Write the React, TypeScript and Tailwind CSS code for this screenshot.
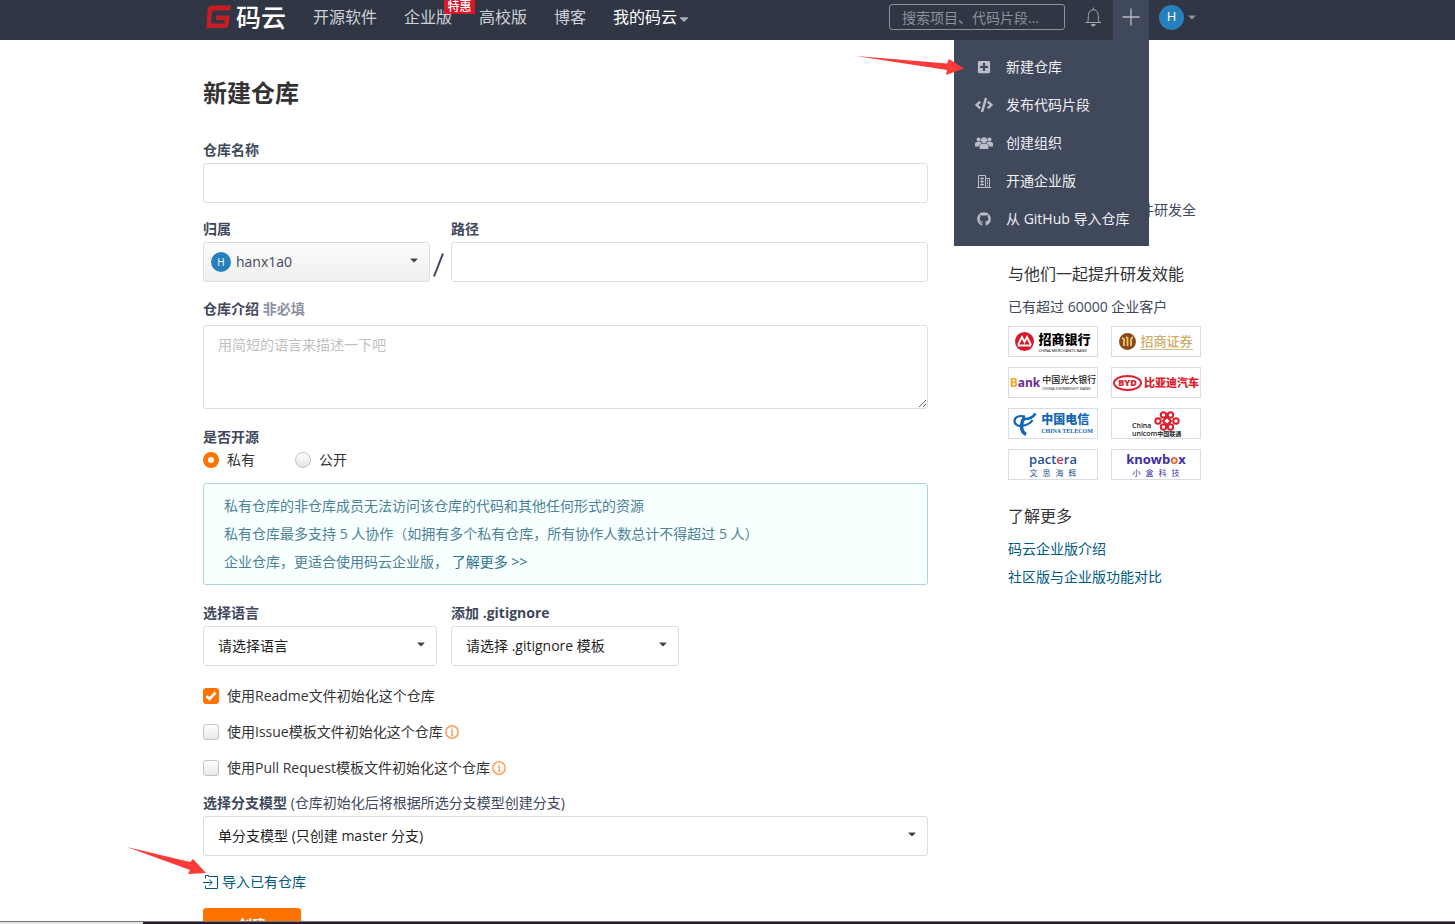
import { useState } from "react";
import type { ReactNode } from "react";
import { FaCaretDown, FaCode, FaGithub, FaPlusSquare } from "react-icons/fa";

const navItems = ["开源软件", "企业版", "高校版", "博客"];

const createMenu = [
  { label: "新建仓库", icon: <FaPlusSquare size={14} /> },
  { label: "发布代码片段", icon: <FaCode size={18} /> },
  { label: "创建组织", icon: <GroupIcon /> },
  { label: "开通企业版", icon: <OfficeIcon /> },
  { label: "从 GitHub 导入仓库", icon: <FaGithub size={14} /> },
];

const fieldClass =
  "block h-10 w-full rounded-[3px] border border-[#dcdddf] bg-white px-3.5 text-sm text-[#1f1f1f] outline-none";

function GroupIcon() {
  return (
    <svg width="18" height="14" viewBox="0 0 18 14" fill="currentColor">
      <circle cx="3.6" cy="3.6" r="2.1" />
      <circle cx="14.4" cy="3.6" r="2.1" />
      <circle cx="9" cy="4.2" r="3" />
      <path d="M0 10V8C0 6.5 1 6 2 6H5.5C6 7 6.3 7.3 6.8 7.6C5 8 4.2 9 4 10.5H1C.4 10.5 0 10.4 0 10Z" />
      <path d="M18 10V8C18 6.5 17 6 16 6H12.5C12 7 11.7 7.3 11.2 7.6C13 8 13.8 9 14 10.5H17C17.6 10.5 18 10.4 18 10Z" />
      <path d="M4.5 11.5C4.5 9 5.3 7.8 7 7.8H11C12.7 7.8 13.5 9 13.5 11.5C13.5 12.5 13 13 12 13H6C5 13 4.5 12.5 4.5 11.5Z" />
    </svg>
  );
}

function OfficeIcon() {
  return (
    <svg width="14" height="15" viewBox="0 0 14 15" fill="none" stroke="currentColor">
      <path d="M1.5 14V1.5H8.5V14M8.5 4.5H12.5V14M0 13.5H14" />
      <path d="M3 4.5H7M3 7.5H7M3 10.5H7M5 3V12M10.5 6V7.5M10.5 8.5V10M10.5 11V12.5" />
    </svg>
  );
}

function Logo() {
  return (
    <a href="#" className="flex items-center gap-1 text-white">
      <svg width="26" height="25" viewBox="0 0 26 25" fill="#c71d23">
        <path d="M6 .5H25L24 5.5H8C6.5 5.5 6 6.3 5.9 7.5L5 18.5H17C18 18.5 18.5 18 18.6 17L18.8 15H10L10.4 10.5H23.5L22.9 18.5C22.7 21.5 21.3 23 18.5 23H4L.5 24.5L1.5 6C1.7 2.5 3 .5 6 .5Z" />
      </svg>
      <span className="text-[25px] leading-6 font-medium">码云</span>
    </a>
  );
}

function Avatar({ className }: { className: string }) {
  return (
    <span
      className={`flex items-center justify-center rounded-full bg-[#2680bd] font-medium text-white ${className}`}
    >
      H
    </span>
  );
}

function Header() {
  return (
    <header className="relative z-10 h-10 shrink-0 bg-[#303643]">
      <div className="mx-auto flex h-full max-w-[1049px] items-start">
        <div className="flex h-[34px] items-center pl-[3px]">
          <Logo />
          <nav className="ml-[27px] flex items-center gap-[27px] text-base leading-6 text-[#cfd2d8]">
            {navItems.map((item) => (
              <a key={item} href="#" className="relative">
                {item}
                {item === "企业版" && (
                  <span className="absolute -top-[5px] left-10 w-[31px] bg-[#d7182a] text-center text-xs leading-[14px] font-medium text-white">
                    特惠
                  </span>
                )}
              </a>
            ))}
            <a href="#" className="flex items-center text-white">
              我的码云
              <FaCaretDown size={14} className="mt-1 text-[#a9adb6]" />
            </a>
          </nav>
        </div>

        <div className="ml-auto flex h-full items-start pr-[54px]">
          <input
            aria-label="搜索"
            placeholder="搜索项目、代码片段..."
            className="mt-1 h-[26px] w-[176px] rounded-[3px] border border-[#8d929c] bg-transparent px-3 text-sm text-white outline-none placeholder:text-[#8d929c]"
          />
          <button aria-label="通知" className="ml-5 flex h-[34px] w-4 items-center text-[#a0a4ad]">
            <svg width="17" height="20" viewBox="0 0 17 20" fill="none" stroke="currentColor" className="shrink-0">
              <path d="M.5 15.5H16M2.5 15.3C3.2 14 3.3 12.5 3.3 8.5C3.3 5 5.5 2.8 8.3 2.8S13.3 5 13.3 8.5C13.3 12.5 13.4 14 14.2 15.3M8.3 2.8V.5" />
              <path d="M6.3 17.5C6.8 19.5 9.8 19.5 10.3 17.5Z" fill="currentColor" />
            </svg>
          </button>
          <div className="relative ml-3 h-10 w-9 bg-[#40485b]">
            <button aria-label="新建" className="flex h-[34px] w-full items-center justify-center text-[#b6bac4]">
              <svg width="18" height="18" viewBox="0 0 18 18" stroke="currentColor" strokeWidth="1.3">
                <path d="M9 .5V17.5M.5 9H17.5" />
              </svg>
            </button>
            <CreateMenu />
          </div>
          <button className="ml-2.5 flex h-[34px] items-center gap-0.5 text-[#8d929c]">
            <Avatar className="size-[25px] text-[13px]" />
            <FaCaretDown size={12} />
          </button>
        </div>
      </div>
    </header>
  );
}

function CreateMenu() {
  return (
    <div className="absolute top-10 right-0 w-[195px] bg-[#40485b] py-2">
      {createMenu.map((item) => (
        <a key={item.label} href="#" className="flex h-[38px] items-center text-sm text-[#f0f1f4]">
          <span className="ml-5 flex w-5 justify-center text-[#b9bdc8]">{item.icon}</span>
          <span className="ml-3">{item.label}</span>
        </a>
      ))}
      <svg
        width="108"
        height="24"
        viewBox="0 0 108 24"
        className="absolute top-3 right-[185px]"
        fill="#fb3a3a"
      >
        <path d="M0 4L91 11.5L93 7L108 16.5L90 23L91 18Z" />
      </svg>
    </div>
  );
}

function Label({ htmlFor, children }: { htmlFor?: string; children: ReactNode }) {
  return (
    <label htmlFor={htmlFor} className="mb-[3px] block text-sm leading-5 font-bold text-[#40485b]">
      {children}
    </label>
  );
}

function Select({ id, option, className = "" }: { id: string; option: string; className?: string }) {
  return (
    <div className="relative">
      <select id={id} className={`${fieldClass} appearance-none ${className}`}>
        <option>{option}</option>
      </select>
      <FaCaretDown
        size={12}
        className="pointer-events-none absolute top-3 right-2.5 text-[#444]"
      />
    </div>
  );
}

function Visibility() {
  const [value, setValue] = useState("私有");

  return (
    <div role="radiogroup" aria-label="是否开源" className="flex gap-10">
      {["私有", "公开"].map((item) => (
        <label key={item} className="flex items-center gap-2 text-sm leading-5 text-[#333]">
          <input
            type="radio"
            name="visibility"
            checked={value === item}
            onChange={() => setValue(item)}
            className="size-4 appearance-none rounded-full border border-[#c4c4c4] bg-linear-to-b from-white to-[#e4e4e4] checked:border-5 checked:border-[#fe7300] checked:bg-white checked:bg-none"
          />
          {item}
        </label>
      ))}
    </div>
  );
}

function InfoIcon() {
  return (
    <svg width="14" height="14" viewBox="0 0 14 14" fill="none" stroke="#f5a05a" strokeWidth="1.5">
      <circle cx="7" cy="7" r="6.2" />
      <path d="M5.8 6H7.3V10M5.6 10.2H8.6M6.3 3.8H7.7" strokeWidth="1.3" />
    </svg>
  );
}

function Check({ label, info, checked }: { label: string; info?: boolean; checked?: boolean }) {
  return (
    <label className="flex items-center text-sm leading-5 text-[#333]">
      <span className="relative mr-2 size-4">
        <input
          type="checkbox"
          defaultChecked={checked}
          className="peer block size-4 appearance-none rounded-[3px] border border-[#c4c4c4] bg-linear-to-b from-white to-[#e8e8e8] checked:border-[#fe7300] checked:bg-[#fe7300] checked:bg-none"
        />
        <svg
          viewBox="0 0 16 16"
          fill="none"
          stroke="white"
          strokeWidth="2.6"
          className="pointer-events-none absolute inset-0 hidden peer-checked:block"
        >
          <path d="M3.5 8L6.5 11L12.5 4.5" />
        </svg>
      </span>
      <span className="mr-0.5">{label}</span>
      {info && <InfoIcon />}
    </label>
  );
}

function RepoForm() {
  return (
    <form className="w-[725px] shrink-0 text-[#40485b]">
      <h1 className="mb-[31px] text-2xl leading-8 font-bold text-[#333]">新建仓库</h1>

      <div className="mb-4">
        <Label htmlFor="name">仓库名称</Label>
        <input id="name" className={fieldClass} />
      </div>

      <div className="mb-[17px] flex items-start">
        <div className="w-[227px]">
          <Label htmlFor="owner">归属</Label>
          <div className="relative">
            <Select
              id="owner"
              option="hanx1a0"
              className="bg-linear-to-b from-[#fbfbfb] to-[#f0f0f0] pl-8 text-[#40485b]"
            />
            <Avatar className="pointer-events-none absolute top-2.5 left-2 size-5 text-[10px]" />
          </div>
        </div>
        <svg width="21" height="24" viewBox="0 0 21 24" className="mt-[34px]" stroke="currentColor" strokeWidth="2">
          <path d="M4 23.5L13 .5" />
        </svg>
        <div className="flex-1">
          <Label htmlFor="path">路径</Label>
          <input id="path" className={fieldClass} />
        </div>
      </div>

      <div className="mb-[18px]">
        <Label htmlFor="intro">
          仓库介绍 <span className="text-[#8c92a4]">非必填</span>
        </Label>
        <textarea
          id="intro"
          placeholder="用简短的语言来描述一下吧"
          className="mt-1.5 block h-[84px] w-full rounded-[3px] border border-[#dcdddf] px-3.5 py-[7px] text-sm leading-6 outline-none placeholder:text-[#bfbfbf]"
        />
      </div>

      <Label>是否开源</Label>
      <Visibility />

      <div className="mt-[13px] mb-[18px] rounded-[3px] border border-[#a9d5de] bg-[#f8ffff] px-5 py-2 text-sm leading-7 text-[#4c8296]">
        <p>私有仓库的非仓库成员无法访问该仓库的代码和其他任何形式的资源</p>
        <p>私有仓库最多支持 5 人协作（如拥有多个私有仓库，所有协作人数总计不得超过 5 人）</p>
        <p>
          企业仓库，更适合使用码云企业版，{" "}
          <a href="#" className="text-[#2f7391]">
            了解更多 &gt;&gt;
          </a>
        </p>
      </div>

      <div className="mb-5 flex gap-3.5">
        <div className="w-[234px]">
          <Label htmlFor="language">选择语言</Label>
          <Select id="language" option="请选择语言" />
        </div>
        <div className="w-[228px]">
          <Label htmlFor="gitignore">添加 .gitignore</Label>
          <Select id="gitignore" option="请选择 .gitignore 模板" />
        </div>
      </div>

      <div className="mb-[15px] flex flex-col items-start gap-4">
        <Check label="使用Readme文件初始化这个仓库" checked />
        <Check label="使用Issue模板文件初始化这个仓库" info />
        <Check label="使用Pull Request模板文件初始化这个仓库" info />
      </div>

      <div className="mb-4">
        <Label htmlFor="branch">
          选择分支模型 <span className="font-normal">(仓库初始化后将根据所选分支模型创建分支)</span>
        </Label>
        <Select id="branch" option="单分支模型 (只创建 master 分支)" />
      </div>

      <div className="relative mb-4 flex">
        <a href="#" className="flex items-center gap-[3px] text-sm leading-5 text-[#005980]">
          <svg width="16" height="16" viewBox="0 0 16 16" fill="none" stroke="currentColor">
            <path d="M2.5 4.5V1.5H5.5V2.5H14.5V14.5H2.5V11.5M0 8.5H9M6 5.5L9.3 8.5L6 11.5" />
          </svg>
          导入已有仓库
        </a>
        <svg
          width="80"
          height="30"
          viewBox="0 0 80 30"
          className="absolute right-full bottom-4 -mr-1"
          fill="#fb3a3a"
        >
          <path d="M0 1L63 16L66 13L79 27L61 28L63 24Z" />
        </svg>
      </div>

      <button
        type="button"
        className="h-[34px] w-[98px] rounded-[3px] bg-[#fe7300] text-sm font-bold text-white"
      >
        创建
      </button>
    </form>
  );
}

function CustomerLogos() {
  const box =
    "flex h-[31px] items-center justify-center overflow-hidden border border-[#d9dde3] bg-white whitespace-nowrap";

  return (
    <div className="grid w-[193px] grid-cols-2 gap-x-[13px] gap-y-2.5">
      <div className={`${box} gap-1`}>
        <svg width="19" height="19" viewBox="0 0 19 19">
          <circle cx="9.5" cy="9.5" r="9.5" fill="#d7182a" />
          <path d="M3 13L7 5L9.5 10L12 5L16 13M3 13.5H16" fill="none" stroke="white" strokeWidth="1.8" />
        </svg>
        <div className="text-black">
          <p className="text-[13px] leading-[18px] font-black">招商银行</p>
          <p className="text-[4px] leading-[5px]">CHINA MERCHANTS BANK</p>
        </div>
      </div>

      <div className={`${box} gap-1`}>
        <svg width="17" height="17" viewBox="0 0 17 17">
          <circle cx="8.5" cy="8.5" r="8.5" fill="#8a4a1c" />
          <path d="M5 13V6L3 5M8.5 13V5L7 4M12 13V6L14 4" fill="none" stroke="#f2c66b" strokeWidth="1.8" />
        </svg>
        <span className="border-b border-[#d9bd84] text-[13px] leading-4 font-medium text-[#cfab66]">
          招商证券
        </span>
      </div>

      <div className={`${box} gap-0.5`}>
        <span className="text-xs font-bold text-[#6b2c8f]">
          <span className="text-[#f5a623]">B</span>ank
        </span>
        <div className="text-[#222]">
          <p className="text-[9px] leading-3 font-medium">中国光大银行</p>
          <p className="text-[4px] leading-[5px]">CHINA EVERBRIGHT BANK</p>
        </div>
      </div>

      <div className={`${box} gap-0.5 text-[#dc1f2e]`}>
        <span className="flex h-4 w-[29px] items-center justify-center rounded-[50%] border-2 border-current text-[9px] font-black">
          BYD
        </span>
        <span className="text-[11px] font-black">比亚迪汽车</span>
      </div>

      <div className={`${box} gap-1 text-[#1467b3]`}>
        <svg width="24" height="24" viewBox="0 0 24 24" fill="none" stroke="currentColor">
          <path d="M22.5 1.5C20 5.5 15 7.5 9 7" strokeWidth="2.5" />
          <path d="M12 4.5C6 3 1.5 5 1.5 9C1.5 13 6 15 11 13.5C15 12.5 18 10.5 19.5 8" strokeWidth="2.2" />
          <path d="M11.5 5C8 10 6.5 19 13 22.5" strokeWidth="3.5" />
        </svg>
        <div>
          <p className="text-xs leading-4 font-black">中国电信</p>
          <p className="font-['Liberation_Serif'] text-[6px] leading-[7px] font-bold">CHINA TELECOM</p>
        </div>
      </div>

      <div className={`${box} relative items-end justify-start pl-5`}>
        <div className="text-[7px] leading-2 font-semibold text-[#222]">
          <p>China</p>
          <p>
            unicom<span className="text-[6px]">中国联通</span>
          </p>
        </div>
        <svg
          width="26"
          height="20"
          viewBox="0 0 26 20"
          fill="none"
          stroke="#dc1f2e"
          strokeWidth="2"
          className="absolute top-0.5 left-[42px]"
        >
          <circle cx="9.5" cy="4" r="2.7" />
          <circle cx="16.5" cy="4" r="2.7" />
          <circle cx="4" cy="10" r="2.7" />
          <circle cx="22" cy="10" r="2.7" />
          <circle cx="9.5" cy="16" r="2.7" />
          <circle cx="16.5" cy="16" r="2.7" />
          <path d="M13 6L17 10L13 14L9 10Z" />
        </svg>
      </div>

      <div className={`${box} flex-col text-[#24508f]`}>
        <span className="text-[13px] leading-4 font-semibold">
          pact<span className="text-[#c8385a]">e</span>ra
        </span>
        <span className="flex gap-[5px] text-[8px] leading-3">
          <i className="not-italic">文</i>
          <i className="not-italic">思</i>
          <i className="not-italic">海</i>
          <i className="not-italic">辉</i>
        </span>
      </div>

      <div className={`${box} flex-col text-[#3b2fa0]`}>
        <span className="text-[13px] leading-4 font-bold">
          knowb<span className="text-[#f0642d]">o</span>x
        </span>
        <span className="flex gap-[5px] text-[8px] leading-3">
          <i className="not-italic">小</i>
          <i className="not-italic">盒</i>
          <i className="not-italic">科</i>
          <i className="not-italic">技</i>
        </span>
      </div>
    </div>
  );
}

function Sidebar() {
  return (
    <aside className="ml-20 flex-1 pt-[123px] text-sm leading-5 text-[#40485b]">
      <p className="w-[188px] text-right">件研发全</p>
      <h2 className="mt-[42px] text-base leading-6 text-[#333]">与他们一起提升研发效能</h2>
      <p className="mt-[11px] mb-[9px]">已有超过 60000 企业客户</p>
      <CustomerLogos />
      <h2 className="mt-6 text-base leading-6 text-[#333]">了解更多</h2>
      <div className="mt-[11px] flex flex-col items-start gap-2 text-[#005980]">
        <a href="#">码云企业版介绍</a>
        <a href="#">社区版与企业版功能对比</a>
      </div>
    </aside>
  );
}

export default function App() {
  return (
    <div className="flex h-screen flex-col bg-white font-['Open_Sans','Noto_Sans_CJK_SC',sans-serif]">
      <Header />
      <main className="min-h-0 flex-1 overflow-hidden">
        <div className="mx-auto flex max-w-[1049px] pt-[37px]">
          <RepoForm />
          <Sidebar />
        </div>
      </main>
      <div className="flex h-[3px] shrink-0">
        <div className="w-[143px] border-t border-[#777] bg-[#e4e4e4]" />
        <div className="flex-1 border-t border-[#777] bg-[#2b1c2d]" />
      </div>
    </div>
  );
}
